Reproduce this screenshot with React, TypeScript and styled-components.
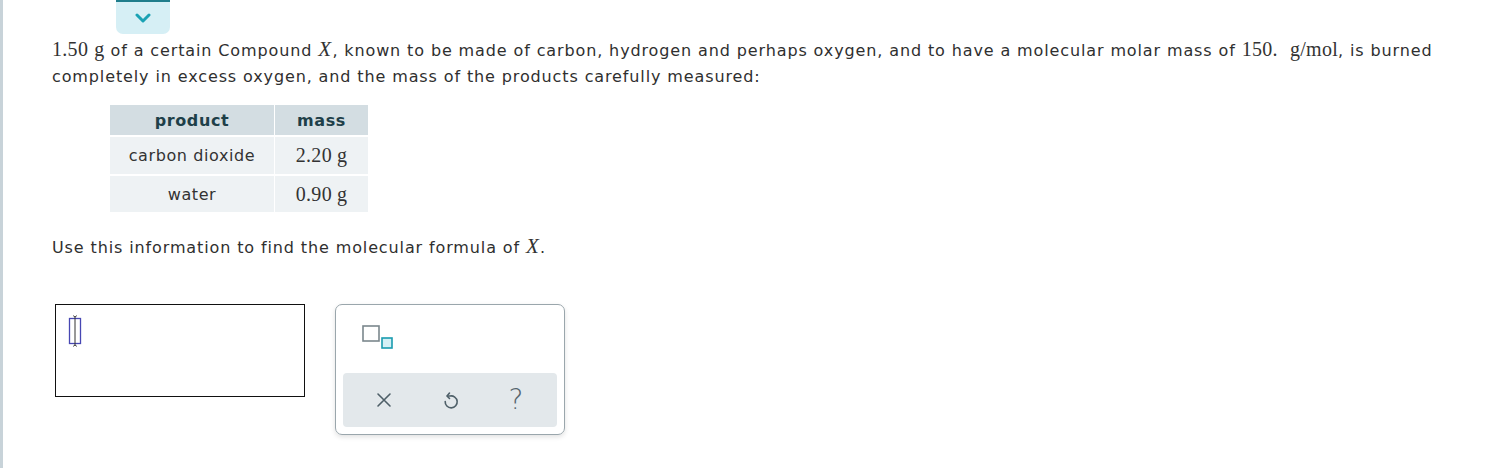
import styled, { createGlobalStyle } from "styled-components"

const GlobalStyle = createGlobalStyle`
  html, body {
    margin: 0;
    padding: 0;
    background: #ffffff;
  }
  body {
    font-family: "DejaVu Sans", Verdana, sans-serif;
    color: #333333;
  }
`

const Page = styled.div`
  min-height: 468px;
  border-left: 3px solid #c8d3d9;
  padding-left: 49px;
  padding-right: 40px;
  box-sizing: border-box;
`

const Tab = styled.div`
  margin-left: 64px;
  width: 54px;
  height: 32px;
  background: #d6eff5;
  border-top: 2px solid #1f7d8b;
  border-radius: 0 0 7px 7px;
  display: flex;
  align-items: center;
  justify-content: center;
`

const Para = styled.p<{ top?: number }>`
  margin: ${props => props.top || 0}px 0 0 0;
  font-size: 16px;
  letter-spacing: 0.88px;
  line-height: 26px;
  color: #2f2f2f;
`

const Math = styled.span<{ italic?: boolean }>`
  font-family: "Liberation Serif", "Times New Roman", serif;
  font-size: ${props => props.italic ? 21 : 20}px;
  letter-spacing: 0.3px;
  font-style: ${props => props.italic ? "italic" : "normal"};
  color: #333;
  margin-right: ${props => props.italic ? 1 : 0}px;
`

const Unit = styled.span<{ gap?: number }>`
  margin-left: ${props => props.gap || 6}px;
`

const Table = styled.div`
  margin: 15px 0 0 58px;
  display: grid;
  grid-template-columns: 164px 93px;
  grid-template-rows: 30px 37px 36px;
  gap: 2px 1px;
  width: fit-content;
`

const HeadCell = styled.div`
  background: #d3dde2;
  color: #1e3f49;
  font-weight: bold;
  font-size: 16px;
  letter-spacing: 0.6px;
  display: flex;
  align-items: center;
  justify-content: center;
`

const Cell = styled.div`
  background: #eef2f4;
  font-size: 16px;
  letter-spacing: 0.6px;
  color: #333;
  display: flex;
  align-items: center;
  justify-content: center;
`

const AnswerRow = styled.div`
  margin: 43px 0 0 3px;
  display: flex;
  align-items: flex-start;
  gap: 30px;
`

const AnswerBox = styled.div`
  width: 250px;
  height: 93px;
  border: 1px solid #111;
  box-sizing: border-box;
  padding: 10px 0 0 11px;
`

const Panel = styled.div`
  width: 230px;
  height: 131px;
  box-sizing: border-box;
  border: 1px solid #9aa6ac;
  border-radius: 7px;
  box-shadow: 0 2px 5px rgba(0, 0, 0, 0.12);
  display: flex;
  flex-direction: column;
  justify-content: space-between;
  padding: 20px 7px 7px 7px;
`

const SuperBtn = styled.div`
  margin-left: 19px;
  height: 24px;
`

const ActionBar = styled.div`
  height: 54px;
  background: #e3e8eb;
  border-radius: 4px;
  display: flex;
  align-items: center;
  justify-content: space-around;
  padding: 0 8px;
`

const ActionBtn = styled.div`
  width: 30px;
  height: 30px;
  display: flex;
  align-items: center;
  justify-content: center;
  color: #4e5f68;
`

const Question = styled.span`
  font-family: "DejaVu Sans", sans-serif;
  font-size: 28px;
  font-weight: 200;
  color: #56666e;
  line-height: 1;
`

function Chevron() {
  return (
    <svg width="16" height="10" viewBox="0 0 16 10">
      <polyline points="2,2 8,8 14,2" fill="none" stroke="#1aa2b4" strokeWidth="3" strokeLinecap="round" strokeLinejoin="round" />
    </svg>
  )
}

function CaretIcon() {
  return (
    <svg width="16" height="32" viewBox="0 0 16 32">
      <rect x="2.5" y="3.5" width="11" height="25" fill="none" stroke="#4747b3" strokeWidth="1.3" />
      <line x1="8" y1="1" x2="8" y2="31" stroke="#333" strokeWidth="1" />
      <polyline points="6,0.5 8,2 10,0.5" fill="none" stroke="#333" strokeWidth="0.8" />
      <polyline points="6,31.5 8,30 10,31.5" fill="none" stroke="#333" strokeWidth="0.8" />
    </svg>
  )
}

function SuperIcon() {
  return (
    <svg width="34" height="26" viewBox="0 0 34 26">
      <rect x="1" y="1" width="16" height="15" fill="none" stroke="#7b878d" strokeWidth="1.6" />
      <rect x="20" y="13" width="10" height="10" fill="#d4f0f6" stroke="#1a9cb0" strokeWidth="1.6" />
    </svg>
  )
}

function CloseIcon() {
  return (
    <svg width="16" height="16" viewBox="0 0 16 16">
      <path d="M2 2 L14 14 M14 2 L2 14" stroke="currentColor" strokeWidth="1.6" strokeLinecap="round" />
    </svg>
  )
}

function UndoIcon() {
  return (
    <svg width="18" height="20" viewBox="0 0 18 20">
      <path d="M4.2 11.5 A6 6 0 1 0 9 6 H6.5" fill="none" stroke="currentColor" strokeWidth="1.6" strokeLinecap="round" />
      <path d="M8.5 3 L6 6 L8.5 8.5" fill="none" stroke="currentColor" strokeWidth="1.6" strokeLinecap="round" strokeLinejoin="round" />
    </svg>
  )
}

export default function App() {
  return (
    <>
      <GlobalStyle />
      <Page>
        <Tab>
          <Chevron />
        </Tab>
        <Para top={2}>
          <Math>1.50<Unit>g</Unit></Math> of a certain Compound <Math italic>X</Math>, known to be made of carbon, hydrogen and perhaps oxygen, and to have a molecular molar mass of <Math>150.<Unit gap={12}>g/mol</Unit></Math>, is burned completely in excess oxygen, and the mass of the products carefully measured:
        </Para>
        <Table>
          <HeadCell>product</HeadCell>
          <HeadCell>mass</HeadCell>
          <Cell>carbon dioxide</Cell>
          <Cell><Math>2.20<Unit gap={5}>g</Unit></Math></Cell>
          <Cell>water</Cell>
          <Cell><Math>0.90<Unit gap={5}>g</Unit></Math></Cell>
        </Table>
        <Para top={21}>
          Use this information to find the molecular formula of <Math italic>X</Math>.
        </Para>
        <AnswerRow>
          <AnswerBox>
            <CaretIcon />
          </AnswerBox>
          <Panel>
            <SuperBtn>
              <SuperIcon />
            </SuperBtn>
            <ActionBar>
              <ActionBtn><CloseIcon /></ActionBtn>
              <ActionBtn><UndoIcon /></ActionBtn>
              <ActionBtn><Question>?</Question></ActionBtn>
            </ActionBar>
          </Panel>
        </AnswerRow>
      </Page>
    </>
  )
}
